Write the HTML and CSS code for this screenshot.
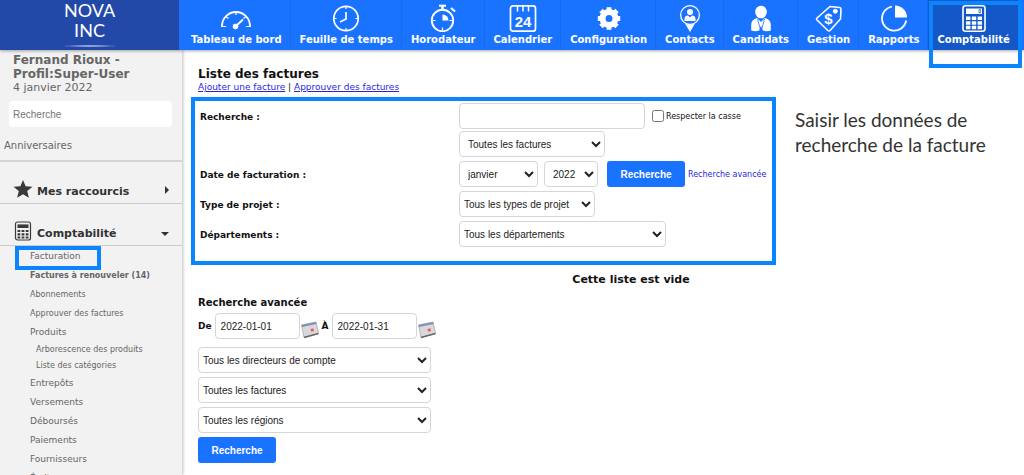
FILE: index.html
```html
<!DOCTYPE html>
<html lang="fr">
<head>
<meta charset="utf-8">
<meta name="viewport" content="width=device-width, initial-scale=1">
<title>Liste des factures</title>
<link rel="stylesheet" href="styles.css">
</head>
<body>
<div class="app">
  <header class="topbar">
    <a class="brand" href="#">
      <span>NOVA</span><span>INC</span>
      <i class="brand-line"></i>
    </a>
    <nav class="mainnav">
      <a class="tab" href="#">
        <svg class="icon" viewBox="0 0 32 28" fill="none" stroke="#fff"><path d="M2 22A14 14 0 1 1 30 22" stroke-width="1.800"/><path d="M1 22.500h5M26 22.500h5M16 8v3M6.500 13l2 1.500M25.500 13l-2 1.500" stroke-width="1.200"/><path d="M16 22l7-6.500" stroke-width="2"/><circle cx="15.500" cy="22.500" r="2.400" fill="#fff"/></svg>
        <span>Tableau de bord</span></a>
      <a class="tab" href="#">
        <svg class="icon" viewBox="0 0 32 28" fill="none" stroke="#fff"><circle cx="16" cy="14.500" r="12.200" stroke-width="1.700"/><path d="M16 8v7l-6 3" stroke-width="1.700"/><path d="M16 3v2M16 24v2M4 14.500h2.500M25.500 14.500H28" stroke-width="1.200"/></svg>
        <span>Feuille de temps</span></a>
      <a class="tab" href="#">
        <svg class="icon" viewBox="0 0 32 28" fill="none" stroke="#fff"><circle cx="15.500" cy="16.500" r="10.700" stroke-width="1.900"/><path d="M12 1.700h7" stroke-width="2"/><path d="M15.500 2v4.500" stroke-width="2.600"/><path d="M24 4l4 3.500" stroke-width="2.200"/><path d="M15.500 10.500v6h6a6 6 0 0 0-6-6z" fill="#fff" stroke="none"/><path d="M15.500 23.500v2.500M6 16.500h2.500M22.500 16.500H25" stroke-width="1.200"/></svg>
        <span>Horodateur</span></a>
      <a class="tab" href="#">
        <svg class="icon" viewBox="0 0 32 28" fill="none" stroke="#fff"><rect x="3.500" y="1.800" width="25" height="25.400" rx="2.500" stroke-width="1.700"/><path d="M10.500 2v5.500M16 2v5.500M21.500 2v5.500" stroke-width="1.500"/><text class="cal-day" x="16" y="22.500" text-anchor="middle">24</text></svg>
        <span>Calendrier</span></a>
      <a class="tab" href="#">
        <svg class="icon" viewBox="0 0 32 28" fill="none" stroke="#fff"><circle cx="16" cy="14.500" r="6.500" stroke-width="6"/><g stroke-width="4.800"><path d="M16 3.300v4M16 21.700v4M4.800 14.500h4M23.200 14.500h4"/><path d="M8 6.500l3 3M21 19.500l3 3M8 22.500l3-3M21 9.500l3-3"/></g></svg>
        <span>Configuration</span></a>
      <a class="tab" href="#">
        <svg class="icon" viewBox="0 0 32 28" fill="none" stroke="#fff"><circle cx="16" cy="11" r="9.400" stroke-width="1.300"/><path d="M11 19.500L16 28l5-8.500q-5 2-10 0z" fill="#fff" stroke="none"/><circle cx="16" cy="8" r="3" fill="#fff" stroke="none"/><path d="M10.500 17v-2c0-2.500 1.500-3.500 3.500-3.500l2 2 2-2c2 0 3.500 1 3.500 3.500v2z" fill="#fff" stroke="none"/></svg>
        <span>Contacts</span></a>
      <a class="tab" href="#">
        <svg class="icon" viewBox="0 0 32 28" fill="#fff"><ellipse cx="16" cy="8" rx="5.800" ry="6.300"/><path d="M6.200 26.500v-5c0-4.500 2-6.500 6-7.500l3.800 4 3.800-4c4 1 6 3 6 7.500v5q-4 1.500-8 0l-1.800-5-1.800 5q-4 1.500-8 0z"/><path d="M12.500 15l3 11M19.500 15l-3 11" stroke="#1a73ff" stroke-width=".8"/></svg>
        <span>Candidats</span></a>
      <a class="tab" href="#">
        <svg class="icon" viewBox="0 0 32 28" fill="none" stroke="#fff"><path d="M4 14L17 2.500l9.500 1q1.500.2 1.500 2L27.500 15 17 26.500q-1 1-2.200 0L4 16q-1-1 0-2z" stroke-width="1.600"/><circle cx="22.300" cy="7.200" r="2" fill="#fff"/><text class="tag-sign" x="15.500" y="20" text-anchor="middle">$</text></svg>
        <span>Gestion</span></a>
      <a class="tab" href="#">
        <svg class="icon" viewBox="0 0 32 28" fill="none" stroke="#fff"><path d="M14 2.500A12.200 12.200 0 1 0 28.200 16.500" stroke-width="1.700"/><path d="M17 1.500V13.500h12A12 12 0 0 0 17 1.500z" fill="#fff" stroke="none"/></svg>
        <span>Rapports</span></a>
      <a class="tab tab-active" href="#">
        <svg class="icon" viewBox="0 0 32 28" fill="none" stroke="#fff"><rect x="5" y="1.800" width="22" height="25.400" rx="2.500" stroke-width="1.600"/><rect x="8" y="4.500" width="16" height="5.500" fill="#fff" stroke="none"/><path d="M21 5.500h1.500v3.300H21z" stroke="#1458c8" stroke-width=".7"/><path d="M8 14.300h16M8 19h16M8 23.500h16" stroke-width="3.500" stroke-dasharray="4.400 1.400"/></svg>
        <span>Comptabilité</span></a>
    </nav>
  </header>

  <div class="body">
    <aside class="sidebar">
      <div class="profile">
        <strong>Fernand Rioux - Profil:Super-User</strong>
        <span>4 janvier 2022</span>
      </div>
      <input class="side-search" type="search" placeholder="Recherche" aria-label="Recherche">
      <a class="birthdays" href="#">Anniversaires</a>
      <button class="section" type="button">
        <svg class="section-icon" viewBox="0 0 20 20"><path fill="#3a3a3a" d="M10 1l2.600 6.300 6.900.4-5.300 4.400 1.700 6.700L10 15.200 4.100 18.800l1.700-6.700L.5 7.700l6.900-.4z"/></svg>
        <span>Mes raccourcis</span>
        <i class="caret caret-right"></i>
      </button>
      <button class="section" type="button">
        <svg class="section-icon" viewBox="0 0 20 20" fill="none" stroke="#3a3a3a"><rect x="2.500" y="1" width="15" height="18" rx="2" stroke-width="1.200"/><path d="M4.500 5.200h11" stroke-width="3.600"/><path d="M4.500 10h11M4.500 13.300h11M4.500 16.500h11" stroke-width="2.200" stroke-dasharray="2.800 1.300"/></svg>
        <span>Comptabilité</span>
        <i class="caret caret-down"></i>
      </button>
      <ul class="menu">
        <li class="marked"><a href="#">Facturation</a></li>
        <li class="small strong"><a href="#">Factures à renouveler (14)</a></li>
        <li class="small"><a href="#">Abonnements</a></li>
        <li class="small"><a href="#">Approuver des factures</a></li>
        <li><a href="#">Produits</a>
          <ul class="submenu">
            <li><a href="#">Arborescence des produits</a></li>
            <li><a href="#">Liste des catégories</a></li>
          </ul>
        </li>
        <li><a href="#">Entrepôts</a></li>
        <li><a href="#">Versements</a></li>
        <li><a href="#">Déboursés</a></li>
        <li><a href="#">Paiements</a></li>
        <li><a href="#">Fournisseurs</a></li>
        <li><a href="#">Écritures</a></li>
      </ul>
    </aside>

    <main class="content">
      <h1>Liste des factures</h1>
      <p class="links"><a href="#">Ajouter une facture</a> | <a href="#">Approuver des factures</a></p>
      <div class="columns">
        <form class="filters">
          <label class="name" for="q">Recherche :</label>
          <div class="stack">
            <div class="line">
              <input class="field query" id="q" type="text">
              <label class="check"><input type="checkbox">Respecter la casse</label>
            </div>
            <select class="field inset kind" aria-label="Factures"><option>Toutes les factures</option></select>
          </div>
          <label class="name" for="month">Date de facturation :</label>
          <div class="line">
            <select class="field inset month" id="month"><option>janvier</option></select>
            <select class="field inset year" aria-label="Année"><option>2022</option></select>
            <button class="go" type="button">Recherche</button>
            <a class="advanced-link" href="#">Recherche avancée</a>
          </div>
          <label class="name" for="ptype">Type de projet :</label>
          <div class="line"><select class="field ptype" id="ptype"><option>Tous les types de projet</option></select></div>
          <label class="name" for="dept">Départements :</label>
          <div class="line"><select class="field dept" id="dept"><option>Tous les départements</option></select></div>
        </form>
        <p class="note">Saisir les données de recherche de la facture</p>
      </div>
      <p class="empty">Cette liste est vide</p>

      <form class="advanced">
        <h2>Recherche avancée</h2>
        <div class="dates">
          <label for="from">De</label>
          <input class="field date" id="from" type="text" value="2022-01-01">
          <button class="cal" type="button" aria-label="Choisir la date de début"><svg viewBox="0 0 18 18"><path d="M.5 4L15 1l2.500 11.500L3 16.500z" fill="#d9d9dc" stroke="#a8a8ac" stroke-width=".8"/><path d="M.5 4L15 1l.6 2L1 6z" fill="#7b93ba"/><path d="M3 16.500l14.500-4" stroke="#66666a" stroke-width="1.500"/><path d="M9.500 8l2.800-.7.700 2.700-2.800.7z" fill="#ee5a5a"/></svg></button>
          <label for="to">À</label>
          <input class="field date" id="to" type="text" value="2022-01-31">
          <button class="cal" type="button" aria-label="Choisir la date de fin"><svg viewBox="0 0 18 18"><path d="M.5 4L15 1l2.500 11.500L3 16.500z" fill="#d9d9dc" stroke="#a8a8ac" stroke-width=".8"/><path d="M.5 4L15 1l.6 2L1 6z" fill="#7b93ba"/><path d="M3 16.500l14.500-4" stroke="#66666a" stroke-width="1.500"/><path d="M9.500 8l2.800-.7.700 2.700-2.800.7z" fill="#ee5a5a"/></svg></button>
        </div>
        <select class="field full" aria-label="Directeurs de compte"><option>Tous les directeurs de compte</option></select>
        <select class="field full" aria-label="Factures"><option>Toutes les factures</option></select>
        <select class="field full" aria-label="Régions"><option>Toutes les régions</option></select>
        <button class="go" type="button">Recherche</button>
      </form>
    </main>
  </div>
</div>
</body>
</html>
```
FILE: styles.css
```css
:root {
  --blue: #1a73ff;
  --mark: #0a84ff;
  --ui: "DejaVu Sans", Verdana, sans-serif;
  --control: "Liberation Sans", Arial, sans-serif;
}

*, *::after { box-sizing: border-box; }

body {
  margin: 0;
  background: #fff;
  color: #111;
  font-family: var(--ui);
  font-size: 10px;
}

h1, h2, p, ul { margin: 0; padding: 0; }
ul { list-style: none; }
a { text-decoration: none; }

.app {
  display: flex;
  flex-direction: column;
  height: 100vh;
  overflow: hidden;
}

/* Top bar */
.topbar {
  display: flex;
  flex: none;
  height: 50px;
  background: var(--blue);
  box-shadow: 0 1px 3px rgba(0, 0, 0, .35);
  position: relative;
  z-index: 2;
}

.brand {
  display: flex;
  flex-direction: column;
  align-items: center;
  width: 179px;
  flex: none;
  background: #2349a8;
  color: #fff;
  font-family: Lato, sans-serif;
  font-size: 18px;
  line-height: 20px;
}

.brand-line {
  width: 50px;
  height: 2px;
  margin-top: 5px;
  background: radial-gradient(closest-side, #dfe7fa, rgba(255, 255, 255, .1));
}

.mainnav { display: flex; padding-left: 3px; }

.tab {
  display: flex;
  flex-direction: column;
  align-items: center;
  gap: 1px;
  padding: 4px 8px 0 9px;
  border-right: 1px solid #1869ec;
  color: #fff;
  font-weight: bold;
  font-size: 10px;
  line-height: 14px;
  white-space: nowrap;
  position: relative;
}

.icon { width: 32px; height: 28px; }
.cal-day { font: bold 15px var(--control); fill: #fff; stroke: none; }
.tag-sign { font: bold 15px var(--control); fill: #fff; stroke: none; }

.tab-active { background: #1458c8; }

.tab-active::after {
  content: "";
  position: absolute;
  inset: 1px -4px -18px 1px;
  border: 4px solid var(--mark);
}

.body {
  display: flex;
  flex: 1;
  min-height: 0;
}

/* Sidebar */
.sidebar {
  width: 182px;
  flex: none;
  padding-top: 3px;
  background: #f2f2f2;
  box-shadow: 1px 0 3px rgba(0, 0, 0, .25);
  color: #666;
}

.sidebar a { color: #666; }

.profile {
  display: flex;
  flex-direction: column;
  padding: 0 24px 0 13px;
  font-size: 12px;
  line-height: 14px;
}

.profile span { font-size: 11px; }

.side-search {
  display: block;
  width: calc(100% - 19px);
  height: 26px;
  margin: 6px 10px 0 9px;
  padding: 0 4px;
  border: 0;
  border-radius: 4px;
  background: #fff;
  font-family: var(--control);
  font-size: 10px;
}

.side-search::placeholder { color: #757575; }

.birthdays {
  display: block;
  padding: 12px 4px 7px;
  border-bottom: 2px solid #d4d4d4;
  font-size: 10px;
  line-height: 14px;
}

.section {
  display: flex;
  align-items: flex-end;
  gap: 4px;
  width: 100%;
  height: 42px;
  padding: 0 13px 4px 13px;
  border: 0;
  border-bottom: 1px solid #ccc;
  background: none;
  color: #333;
  font: bold 11px/14px var(--ui);
  text-align: left;
}

.section span { flex: 1; }
.section-icon { width: 20px; height: 20px; }

.caret {
  margin-bottom: 5px;
  border: 4px solid transparent;
}

.caret-right { border-left-color: #333; border-right-width: 0; }
.caret-down { border-top-color: #333; border-bottom-width: 0; }

.menu { font-size: 9px; }
.menu > li { padding-left: 30px; line-height: 19px; }
.menu .marked { position: relative; line-height: 20px; }

.marked::after {
  content: "";
  position: absolute;
  inset: 0 auto -4px 15px;
  width: 86px;
  border: 4px solid var(--mark);
}

.menu .small { font-size: 8px; }
.menu .strong { font-weight: bold; }
.submenu { padding-left: 6px; font-size: 8px; line-height: 16px; }

/* Content */
.content {
  flex: 1;
  padding: 17px 16px 0 16px;
  min-width: 0;
}

h1 { font-size: 12px; line-height: 14px; }

.links { font-size: 9px; line-height: 13px; }
.links a { color: #2a1fe0; text-decoration: underline; }

.columns {
  display: flex;
  align-items: flex-start;
  gap: 19px;
  margin: 3px 0 0 -7px;
}

.filters {
  display: grid;
  flex: none;
  grid-template-columns: 259px auto;
  width: 585px;
  row-gap: 4px;
  padding: 2px 4px 14px 5px;
  border: 4px solid var(--mark);
}

.name {
  padding-top: 7px;
  font-weight: bold;
  font-size: 9px;
  line-height: 14px;
}

.stack { display: grid; gap: 2px; }
.line { display: flex; align-items: center; }

.field {
  height: 26px;
  padding: 0 5px;
  border: 1px solid #d6d6d6;
  border-radius: 4px;
  background: #fff;
  color: #222;
  font-family: var(--control);
  font-size: 10px;
}

select.field { padding: 0; }
select.inset { padding-left: 4px; }

.query { width: 186px; }
.kind { width: 146px; }
.month { width: 79px; margin-right: 6px; }
.year { width: 54px; margin-right: 9px; }
.ptype { width: 136px; }
.dept { width: 207px; }

.check {
  display: flex;
  align-items: center;
  gap: 2px;
  margin-left: 7px;
  font-size: 8px;
}

.check input { width: 12px; height: 12px; margin: 0; }

.go {
  width: 78px;
  height: 26px;
  padding: 0;
  border: 0;
  border-radius: 3px;
  background: var(--blue);
  color: #fff;
  font: bold 10px var(--control);
}

.advanced-link { margin-left: 3px; color: #2a1fe0; font-size: 8px; }

.note {
  padding-top: 10px;
  color: #333;
  font-family: Lato, sans-serif;
  font-size: 19px;
  line-height: 25px;
}

.empty {
  margin-top: 7px;
  padding-left: 56px;
  text-align: center;
  font-weight: bold;
  font-size: 11px;
  line-height: 16px;
}

.advanced {
  display: flex;
  flex-direction: column;
  align-items: flex-start;
  gap: 4px;
  margin-top: 8px;
}

h2 { font-size: 10px; line-height: 13px; }

.dates {
  display: flex;
  align-items: center;
  margin-bottom: 4px;
  font-weight: bold;
  font-size: 9px;
}

.date { width: 85px; margin-left: 3px; }

.cal {
  width: 18px;
  height: 18px;
  margin: 8px 3px 0 1px;
  padding: 0;
  border: 0;
  background: none;
}

.cal svg { display: block; }
.full { width: 233px; }
```
